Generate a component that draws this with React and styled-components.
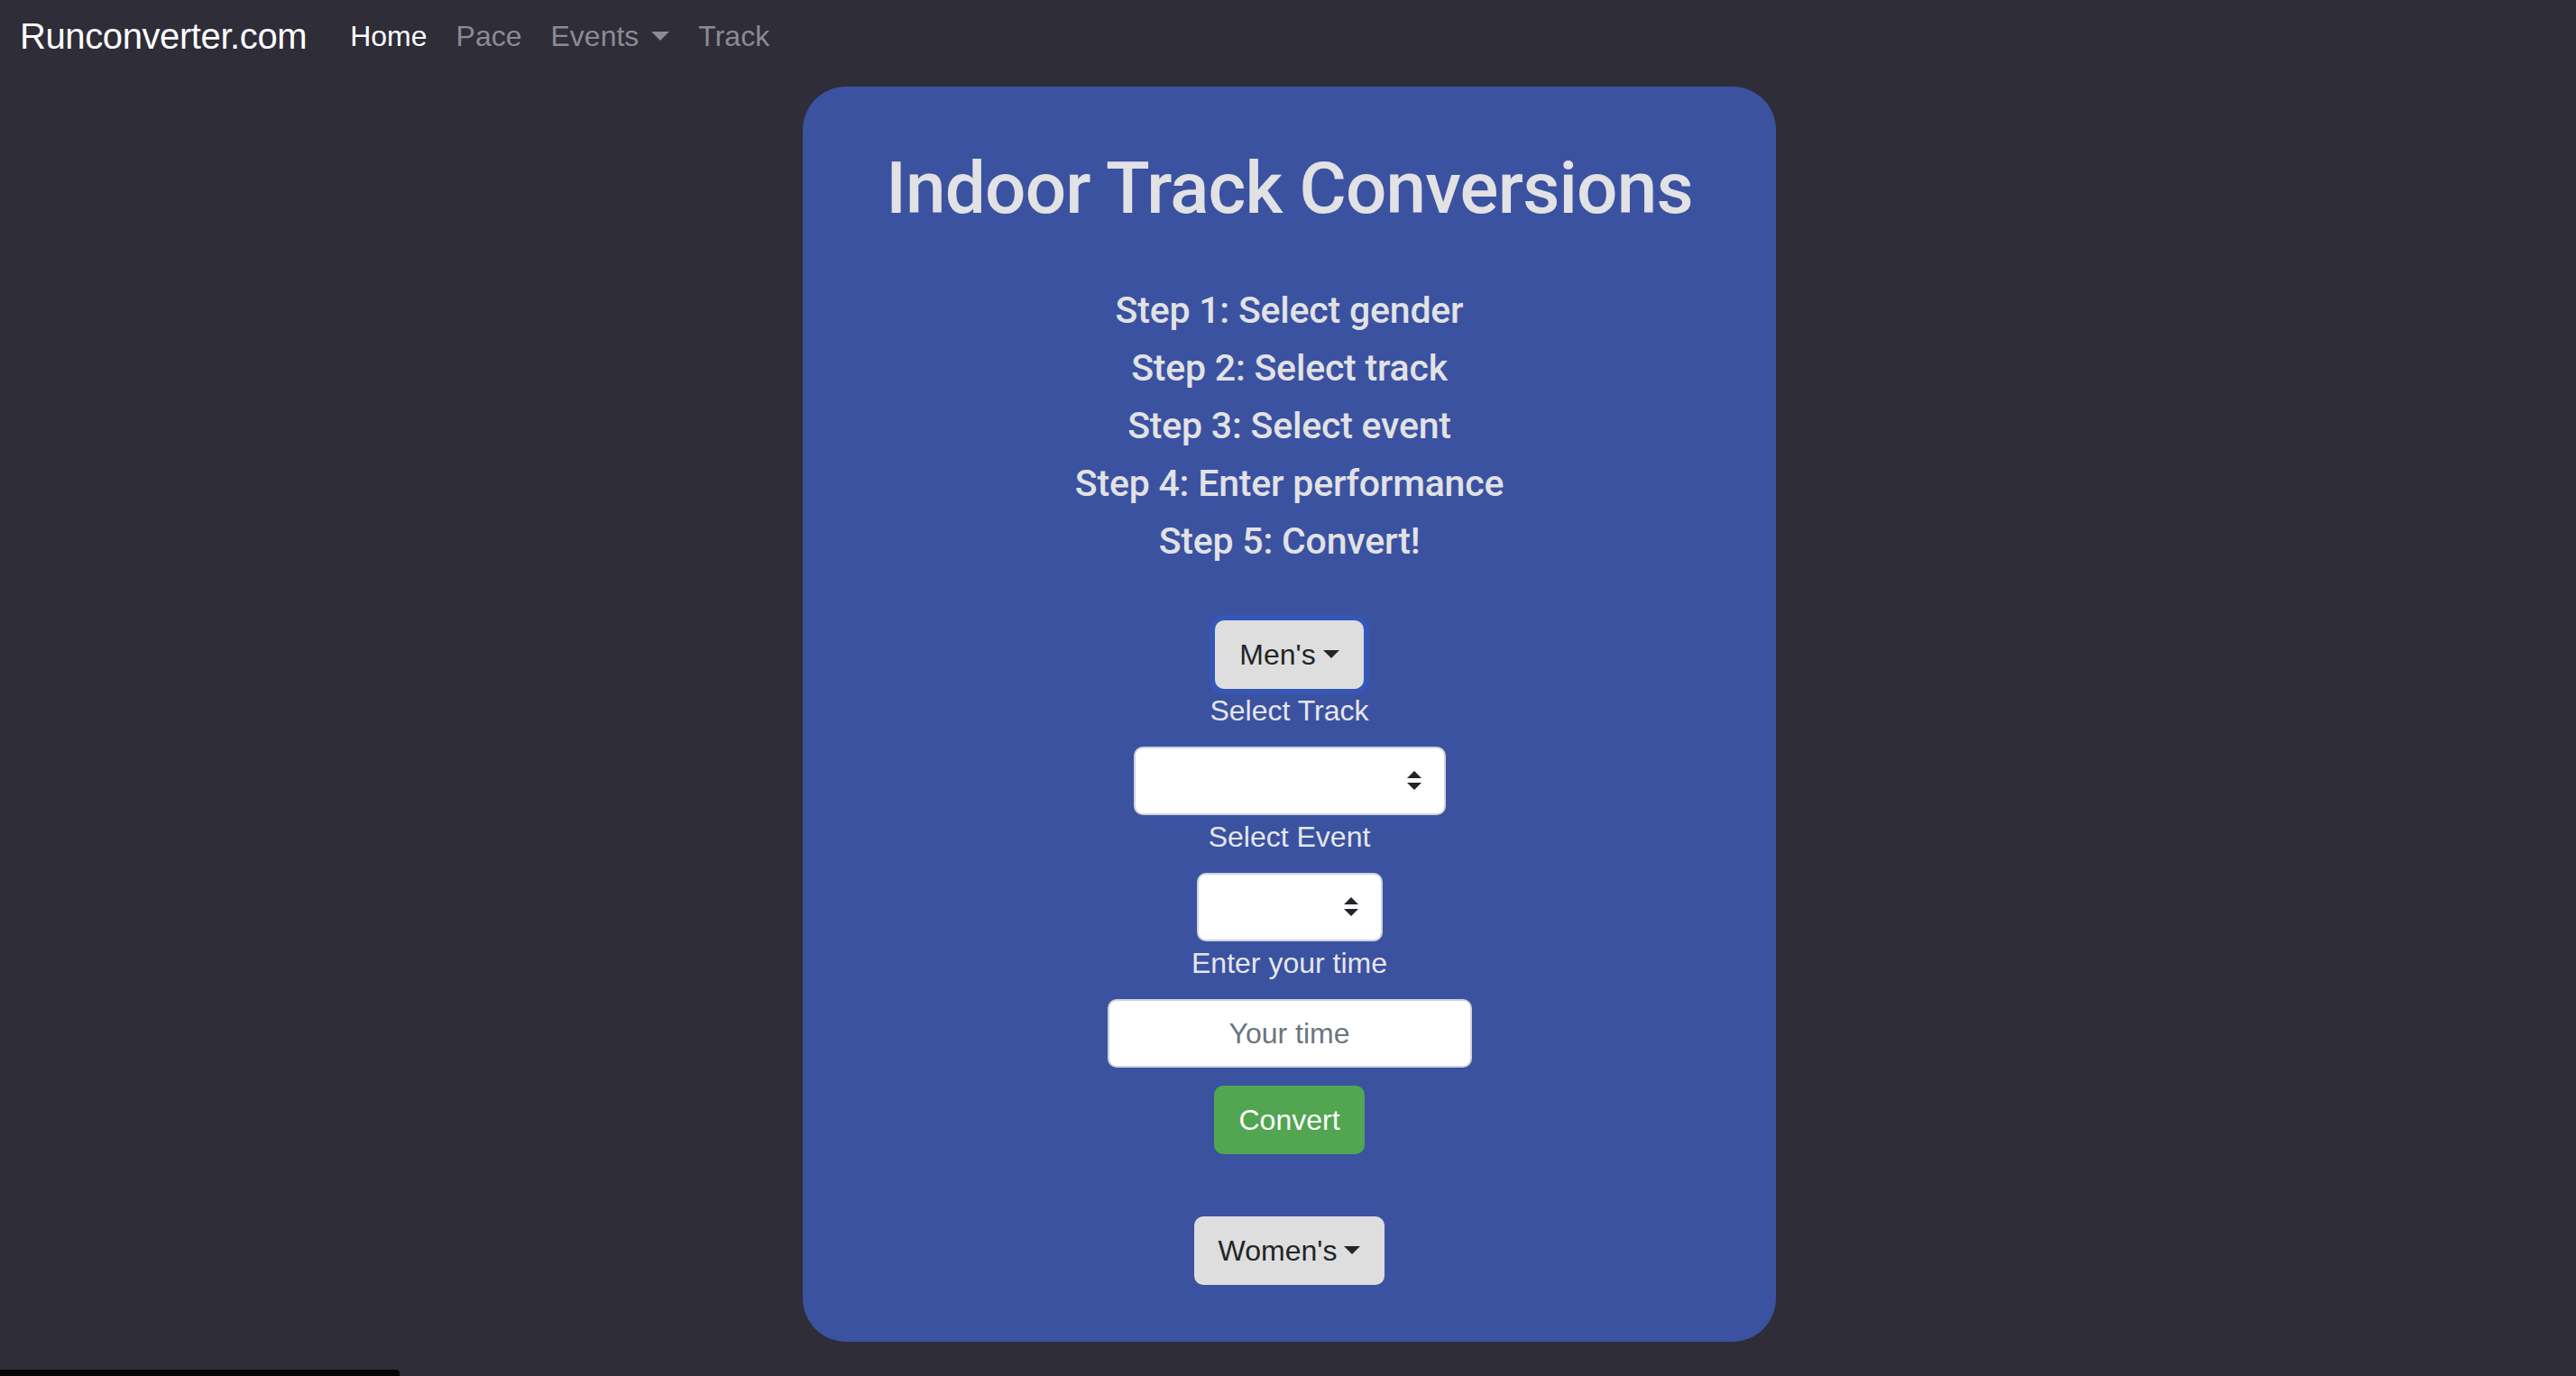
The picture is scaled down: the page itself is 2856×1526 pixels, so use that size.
import React from "react"
import styled, { createGlobalStyle } from "styled-components"

const GlobalStyle = createGlobalStyle`
  * {
    box-sizing: border-box;
  }
  body {
    margin: 0;
    background-color: #2e2d38;
    font-family: "Liberation Sans", Arial, sans-serif;
    min-height: 100vh;
  }
`

const Navbar = styled.nav`
  display: flex;
  align-items: center;
  height: 80px;
  padding: 0 24px 0 22px;
`

const Brand = styled.a`
  font-size: 40px;
  color: #fff;
  text-decoration: none;
  margin-right: 32px;
  letter-spacing: -0.4px;
`

const NavLinks = styled.ul`
  display: flex;
  list-style: none;
  margin: 0;
  padding: 0;
`

const NavLink = styled.li`
  font-size: 32px;
  line-height: 48px;
  padding: 0 16px;
  color: ${({ $active }) => ($active ? "#ffffff" : "#8c8b92")};
  &::after {
    content: ${({ $dropdown }) => ($dropdown ? "''" : "none")};
    display: inline-block;
    margin-left: 14px;
    vertical-align: 6px;
    border-top: 10px solid currentColor;
    border-left: 10px solid transparent;
    border-right: 10px solid transparent;
  }
`

const Main = styled.main`
  display: flex;
  justify-content: center;
  padding-top: 16px;
  padding-left: 3px;
`

const Card = styled.section`
  width: 1079px;
  background-color: #3b52a1;
  border-radius: 48px;
  padding: 65px 0 63px;
  display: flex;
  flex-direction: column;
  align-items: center;
  text-align: center;
  color: #e3e3e5;
`

const Title = styled.h1`
  font-family: Roboto, "Liberation Sans", sans-serif;
  font-weight: 500;
  font-size: 80px;
  line-height: 96px;
  letter-spacing: -0.8px;
  margin: 0 0 63px;
  color: #e2e2e4;
`

const Step = styled.h5`
  font-family: Roboto, "Liberation Sans", sans-serif;
  font-weight: 500;
  font-size: 41px;
  line-height: 48px;
  letter-spacing: -0.2px;
  margin: 0 0 16px;
  color: #e2e2e4;
`

const DropdownButton = styled.button`
  font-family: "Liberation Sans", Arial, sans-serif;
  font-size: 32px;
  line-height: 48px;
  color: #212529;
  background-color: #dedede;
  border: 2px solid #dedede;
  border-radius: 10px;
  padding: 12px 25px;
  margin-top: ${({ $gap }) => $gap}px;
  box-shadow: ${({ $focused }) => ($focused ? "0 0 0 6px #3557b6" : "none")};
  &::after {
    content: "";
    display: inline-block;
    margin-left: 8px;
    vertical-align: 7px;
    border-top: 9px solid currentColor;
    border-left: 9px solid transparent;
    border-right: 9px solid transparent;
  }
`

const FieldLabel = styled.div`
  font-size: 32px;
  line-height: 48px;
  color: #e6e6ea;
  margin-bottom: ${({ $gap }) => $gap}px;
`

const SelectBox = styled.div`
  width: ${({ $width }) => $width}px;
  height: 76px;
  background-color: #fff;
  border: 2px solid #ced4da;
  border-radius: 10px;
  display: flex;
  align-items: center;
  justify-content: flex-end;
  padding-right: 24px;
  svg {
    width: 18px;
    height: 22px;
  }
`

const TimeInput = styled.input`
  width: 404px;
  height: 76px;
  border: 2px solid #ced4da;
  border-radius: 10px;
  background-color: #fff;
  font-family: "Liberation Sans", Arial, sans-serif;
  font-size: 32px;
  text-align: center;
  outline: none;
  &::placeholder {
    color: #6c757d;
  }
`

const ConvertButton = styled.button`
  font-family: "Liberation Sans", Arial, sans-serif;
  font-size: 32px;
  line-height: 48px;
  color: #fff;
  background-color: #52a551;
  border: 2px solid #52a551;
  border-radius: 10px;
  padding: 12px 25px;
  margin-top: 20px;
`

const ScrollThumb = styled.div`
  position: fixed;
  left: 0;
  bottom: 0;
  width: 443px;
  height: 7px;
  background-color: #050507;
  border-top-right-radius: 4px;
`

const Arrows = () => (
  <svg viewBox="0 0 18 22">
    <path d="M9 0 L17 8 L1 8 Z M1 13 L17 13 L9 21 Z" fill="#212529" />
  </svg>
)

const steps = [
  "Step 1: Select gender",
  "Step 2: Select track",
  "Step 3: Select event",
  "Step 4: Enter performance",
  "Step 5: Convert!",
]

const App = () => {
  return (
    <>
      <GlobalStyle />
      <Navbar>
        <Brand href="#">Runconverter.com</Brand>
        <NavLinks>
          <NavLink $active>Home</NavLink>
          <NavLink>Pace</NavLink>
          <NavLink $dropdown>Events</NavLink>
          <NavLink>Track</NavLink>
        </NavLinks>
      </Navbar>
      <Main>
        <Card>
          <Title>Indoor Track Conversions</Title>
          {steps.map(step => (
            <Step key={step}>{step}</Step>
          ))}
          <DropdownButton $gap={48} $focused>
            Men's
          </DropdownButton>
          <FieldLabel $gap={16}>Select Track</FieldLabel>
          <SelectBox $width={346}>
            <Arrows />
          </SelectBox>
          <FieldLabel $gap={16}>Select Event</FieldLabel>
          <SelectBox $width={206}>
            <Arrows />
          </SelectBox>
          <FieldLabel $gap={16}>Enter your time</FieldLabel>
          <TimeInput placeholder="Your time" />
          <ConvertButton>Convert</ConvertButton>
          <DropdownButton $gap={69}>Women's</DropdownButton>
        </Card>
      </Main>
      <ScrollThumb />
    </>
  )
}

export default App
